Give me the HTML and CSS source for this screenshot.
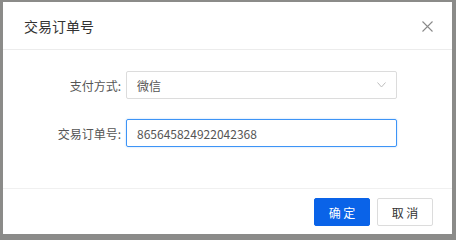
FILE: index.html
```html
<!DOCTYPE html>
<html lang="zh">
<head>
<meta charset="utf-8">
<link rel="stylesheet" href="styles.css">
</head>
<body>
<div class="dialog">
  <div class="header">
    <span class="title">交易订单号</span>
    <span class="close">
      <svg width="11" height="11" viewBox="0 0 11 11"><path d="M0.5 0.5L10.5 10.5M10.5 0.5L0.5 10.5" stroke="#8a8a8a" stroke-width="1.1" fill="none"/></svg>
    </span>
  </div>
  <div class="content">
    <div class="row">
      <label class="label">支付方式:</label>
      <div class="control select">
        <span>微信</span>
        <svg class="chev" width="9" height="6" viewBox="0 0 9 6"><path d="M0.5 0.5L4.5 5L8.5 0.5" stroke="#bdbdbd" stroke-width="1" fill="none"/></svg>
      </div>
    </div>
    <div class="row">
      <label class="label">交易订单号:</label>
      <div class="control input">865645824922042368</div>
    </div>
  </div>
  <div class="footer">
    <button class="btn primary">确 定</button>
    <button class="btn">取 消</button>
  </div>
</div>
</body>
</html>
```
FILE: styles.css
```css
*, *::before, *::after {
  box-sizing: border-box;
}
html, body {
  margin: 0;
  padding: 0;
}
body {
  background: #8b8b89;
  width: 456px;
  height: 237px;
  padding: 2px 0 0 3px;
  font-family: "Noto Sans CJK SC", "Noto Sans", sans-serif;
  font-size: 12px;
  color: #555;
}
.dialog {
  width: 449px;
  height: 232px;
  background: #fff;
  display: flex;
  flex-direction: column;
}
.header {
  height: 48px;
  border-bottom: 1px solid #ececec;
  display: flex;
  align-items: center;
  justify-content: space-between;
  padding: 0 19px 0 21px;
  flex: none;
}
.title {
  font-size: 14px;
  color: #333;
}
.close {
  display: flex;
  margin-top: 1px;
}
.content {
  flex: 1;
  padding-top: 21px;
  display: flex;
  flex-direction: column;
  gap: 20px;
}
.row {
  display: flex;
  align-items: center;
}
.label {
  width: 118px;
  text-align: right;
  margin-right: 5px;
  color: #555;
}
.control {
  width: 271px;
  height: 28px;
  border: 1px solid #dcdcdc;
  border-radius: 2px;
  display: flex;
  align-items: center;
  padding: 0 10px;
  color: #555;
}
.select {
  justify-content: space-between;
}
.input {
  border-color: #3d94f6;
  box-shadow: 0 0 2px rgba(61, 148, 246, 0.4);
}
.footer {
  flex: none;
  height: 46px;
  border-top: 1px solid #f0f0f0;
  display: flex;
  justify-content: flex-end;
  align-items: flex-start;
  padding: 9px 19px 0 0;
  gap: 7px;
}
.btn {
  width: 56px;
  height: 28px;
  border: 1px solid #dcdcdc;
  border-radius: 2px;
  background: #fff;
  color: #333;
  font-family: "Noto Sans CJK SC", sans-serif;
  font-size: 12px;
  padding: 0;
}
.btn.primary {
  background: #0a63e8;
  border-color: #0a63e8;
  color: #fff;
}
```
